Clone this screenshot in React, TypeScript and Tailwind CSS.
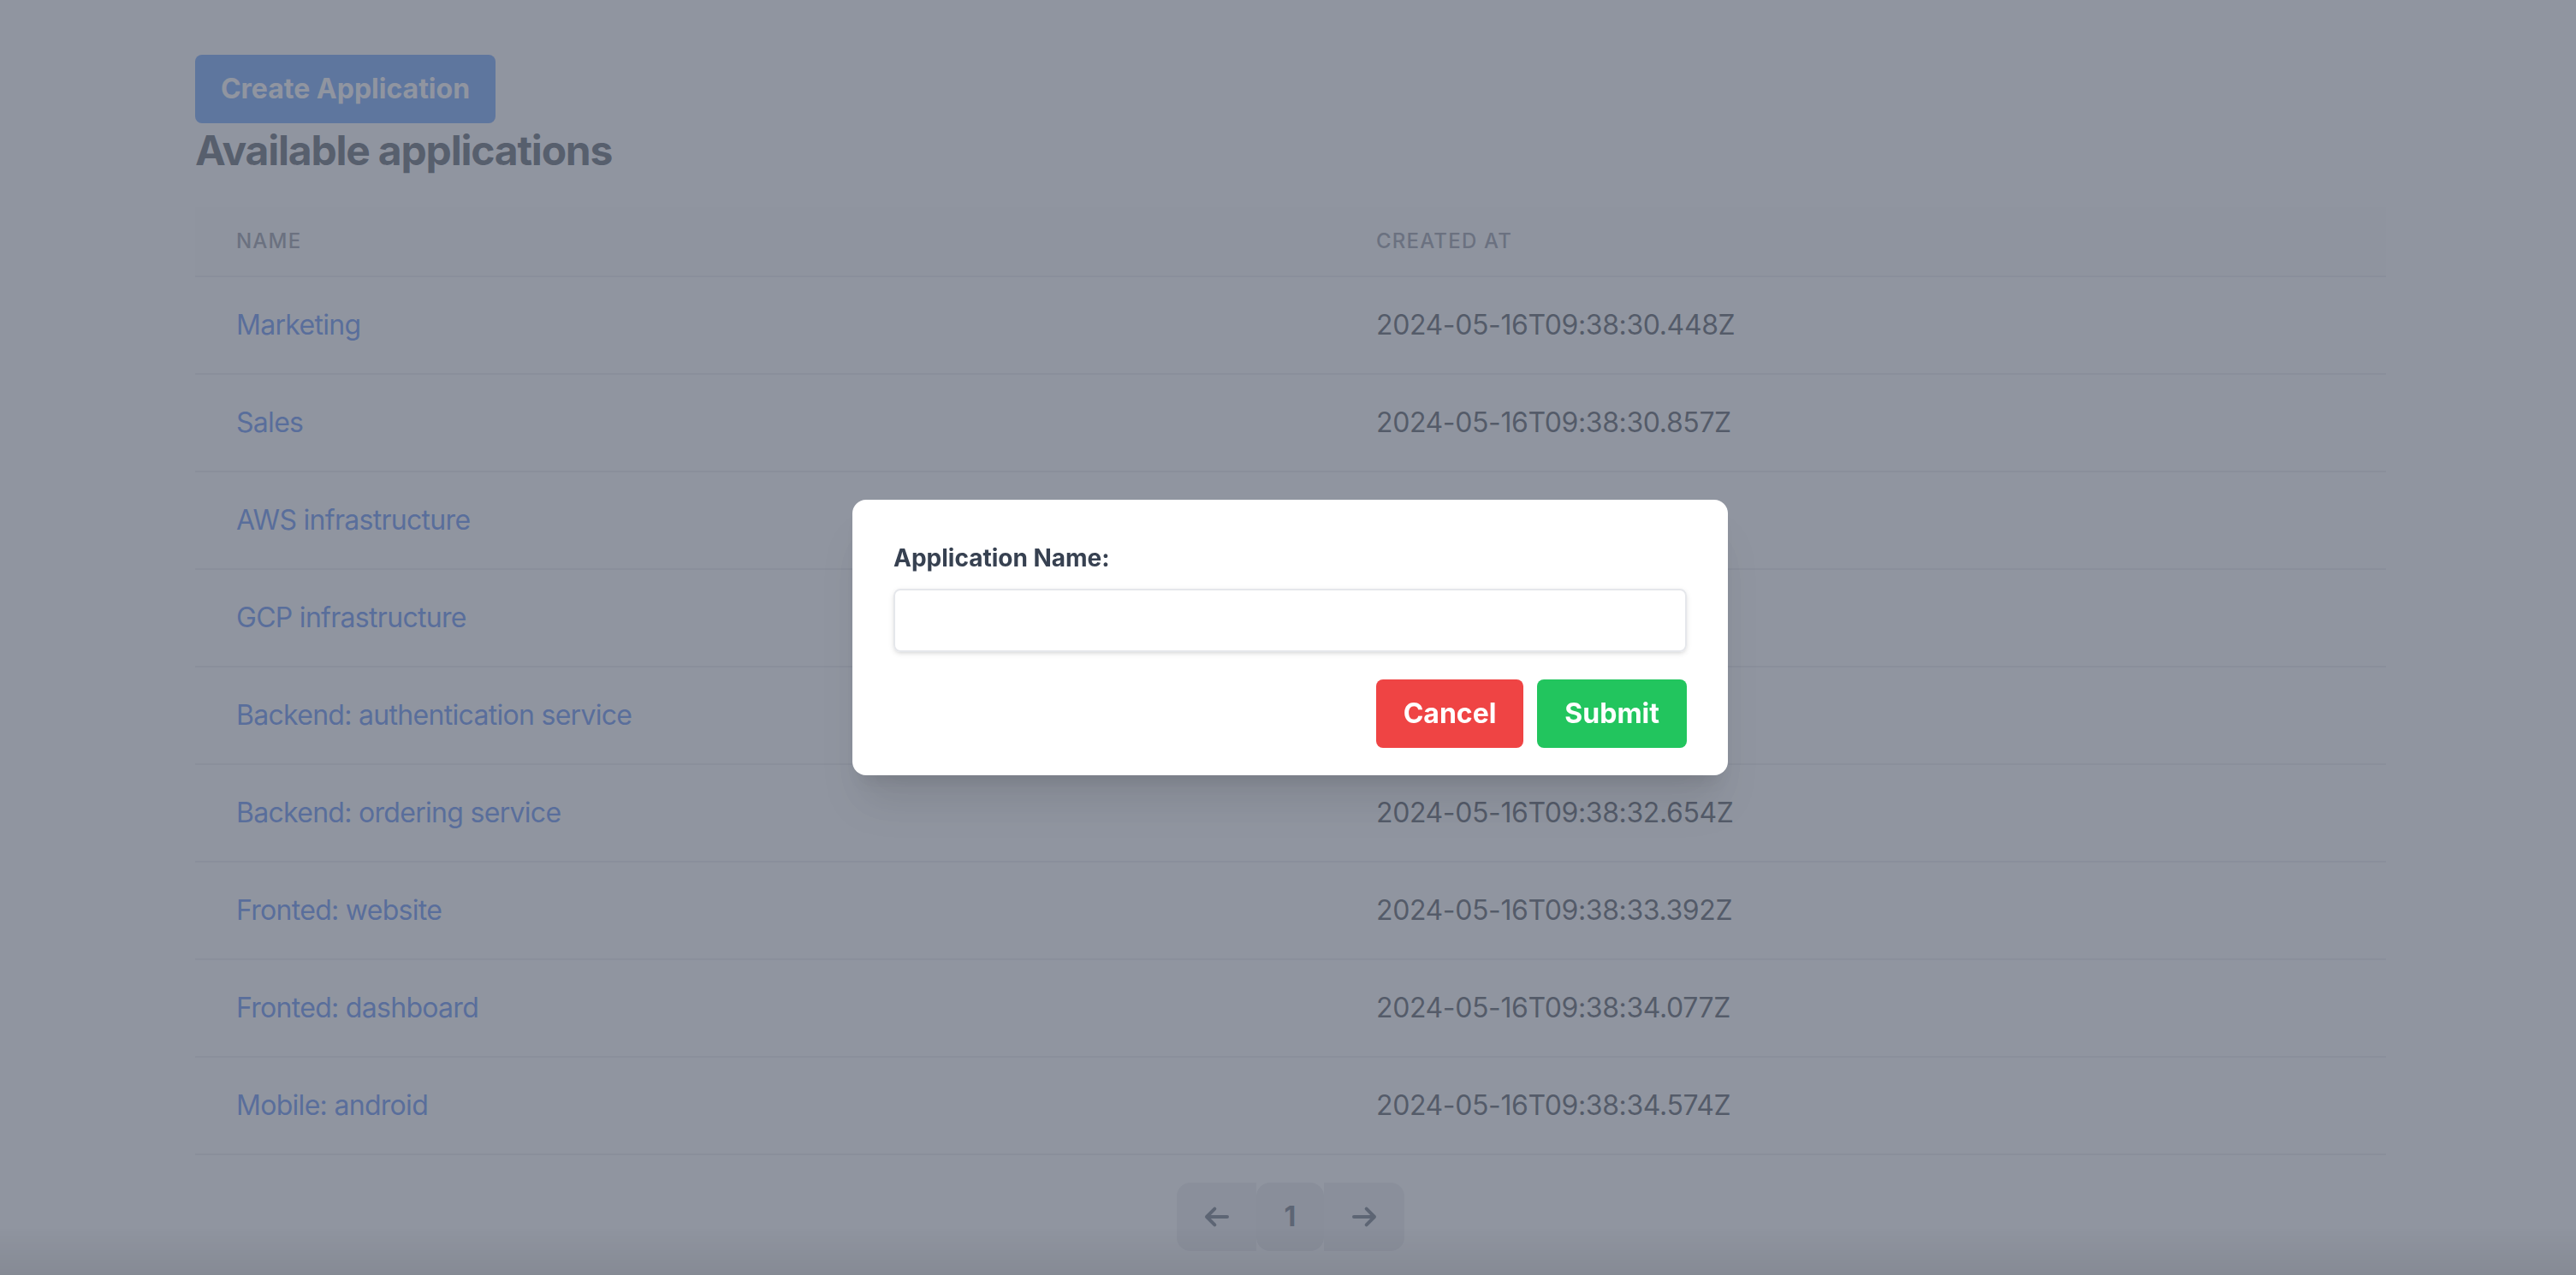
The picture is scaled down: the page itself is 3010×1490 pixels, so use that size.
const apps = [
  { name: "Marketing", createdAt: "2024-05-16T09:38:30.448Z" },
  { name: "Sales", createdAt: "2024-05-16T09:38:30.857Z" },
  { name: "AWS infrastructure", createdAt: "2024-05-16T09:38:31.209Z" },
  { name: "GCP infrastructure", createdAt: "2024-05-16T09:38:31.602Z" },
  { name: "Backend: authentication service", createdAt: "2024-05-16T09:38:32.115Z" },
  { name: "Backend: ordering service", createdAt: "2024-05-16T09:38:32.654Z" },
  { name: "Fronted: website", createdAt: "2024-05-16T09:38:33.392Z" },
  { name: "Fronted: dashboard", createdAt: "2024-05-16T09:38:34.077Z" },
  { name: "Mobile: android", createdAt: "2024-05-16T09:38:34.574Z" },
];

function Arrow({ dir }: { dir: "left" | "right" }) {
  return (
    <svg
      viewBox="0 0 24 24"
      className="w-[32px] h-[32px]"
      fill="none"
      stroke="currentColor"
      strokeWidth={3}
      strokeLinecap="round"
      strokeLinejoin="round"
    >
      {dir === "left" ? (
        <path d="M10 19l-7-7m0 0l7-7m-7 7h18" />
      ) : (
        <path d="M14 5l7 7m0 0l-7 7m7-7H3" />
      )}
    </svg>
  );
}

export default function App() {
  return (
    <div className="min-h-screen bg-white font-['Inter','Liberation_Sans',sans-serif]">
      <div className="w-[2560px] ml-[228px] pt-16">
        <button className="w-[351px] h-[80px] rounded-[8px] bg-[#3b82f6] text-white text-[32px] font-bold">
          Create Application
        </button>
        <h1 className="text-[48px] leading-[64px] font-bold tracking-[-0.025em] text-[#1f2937]">
          Available applications
        </h1>

        {/* TABLE */}
        <div className="mt-[34px]">
          <div className="grid grid-cols-[1332px_1228px] h-[82px] bg-[#f9fafb] border-b-2 border-[#e5e7eb]">
            <div className="px-12 py-6 text-[24px] leading-[32px] font-medium uppercase tracking-wider text-[#6b7280]">
              Name
            </div>
            <div className="px-12 py-6 text-[24px] leading-[32px] font-medium uppercase tracking-wider text-[#6b7280]">
              Created at
            </div>
          </div>
          {apps.map((app) => (
            <div
              key={app.name}
              className="grid grid-cols-[1332px_1228px] h-[114px] border-b-2 border-[#e5e7eb]"
            >
              <div className="px-12 py-8 text-[32px] leading-[48px] tracking-[-0.022em] text-[#2563eb] whitespace-nowrap">
                {app.name}
              </div>
              <div className="px-12 py-8 text-[32px] leading-[48px] tracking-[-0.012em] text-[#111827] whitespace-nowrap">
                {app.createdAt}
              </div>
            </div>
          ))}
        </div>

        {/* PAGINATION */}
        <div className="flex justify-center mt-8">
          <div className="flex">
            <button className="w-[93px] h-[80px] flex items-center justify-center bg-[#e5e7eb] rounded-l-[16px] text-[#374151]">
              <Arrow dir="left" />
            </button>
            <button className="w-[79px] h-[80px] flex items-center justify-center bg-[#e1e3e7] rounded-[16px] text-[32px] font-bold text-[#374151]">
              1
            </button>
            <button className="w-[94px] h-[80px] flex items-center justify-center bg-[#e5e7eb] rounded-r-[16px] text-[#374151]">
              <Arrow dir="right" />
            </button>
          </div>
        </div>
      </div>

      {/* OVERLAY + MODAL */}
      <div className="fixed inset-0 bg-[#6b7280]/75 flex items-center justify-center pl-[5px]">
        <div className="w-[1023px] bg-white rounded-[16px] px-12 pt-12 pb-8 shadow-[0_40px_50px_-10px_rgba(0,0,0,0.1),0_16px_20px_-12px_rgba(0,0,0,0.1)]">
          <label className="block text-[28px] leading-[40px] font-bold text-[#374151] mb-4">
            Application Name:
          </label>
          <input
            type="text"
            className="block w-full h-[74px] border-2 border-[#e5e7eb] rounded-[8px] px-6 text-[28px] text-[#374151] shadow-[0_2px_6px_0_rgba(0,0,0,0.1),0_2px_4px_-2px_rgba(0,0,0,0.1)] outline-none"
          />
          <div className="flex justify-end mt-8">
            <button className="h-[80px] px-8 rounded-[8px] bg-[#ef4444] text-white text-[32px] font-bold mr-4">
              Cancel
            </button>
            <button className="h-[80px] px-8 rounded-[8px] bg-[#22c55e] text-white text-[32px] font-bold">
              Submit
            </button>
          </div>
        </div>
      </div>

      {/* bottom shade */}
      <div className="fixed left-0 right-0 bottom-0 h-[56px] bg-linear-to-b from-transparent to-black/[0.07] pointer-events-none" />
    </div>
  );
}
